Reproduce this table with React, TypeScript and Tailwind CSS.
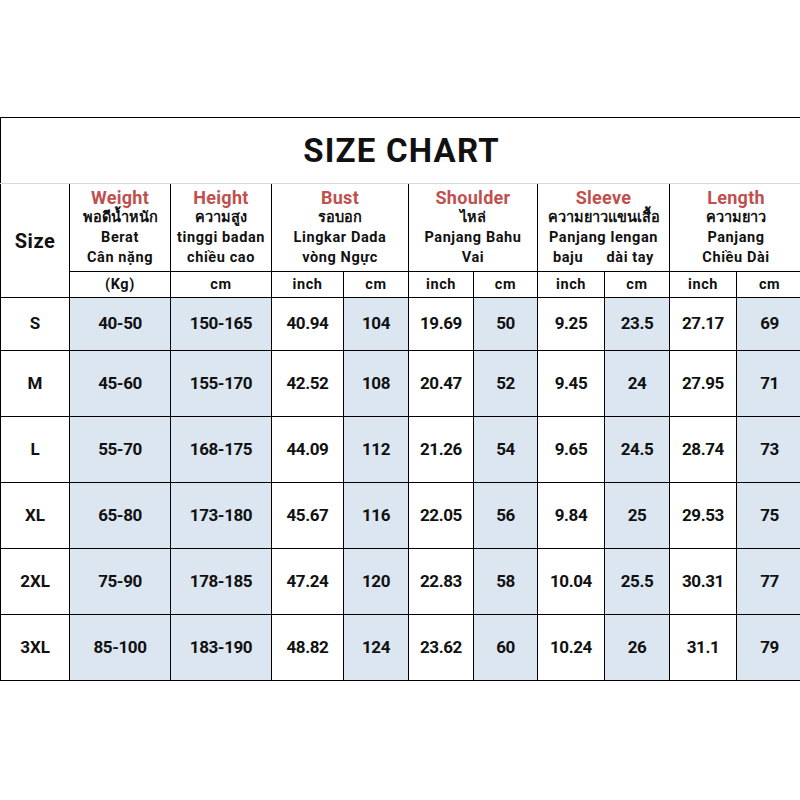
import React from "react";

const rows = [
  ["S", "40-50", "150-165", "40.94", "104", "19.69", "50", "9.25", "23.5", "27.17", "69"],
  ["M", "45-60", "155-170", "42.52", "108", "20.47", "52", "9.45", "24", "27.95", "71"],
  ["L", "55-70", "168-175", "44.09", "112", "21.26", "54", "9.65", "24.5", "28.74", "73"],
  ["XL", "65-80", "173-180", "45.67", "116", "22.05", "56", "9.84", "25", "29.53", "75"],
  ["2XL", "75-90", "178-185", "47.24", "120", "22.83", "58", "10.04", "25.5", "30.31", "77"],
  ["3XL", "85-100", "183-190", "48.82", "124", "23.62", "60", "10.24", "26", "31.1", "79"],
];

const widths = [69, 101, 101, 72, 65, 65, 64, 67, 65, 67, 66];
const shaded = [false, true, true, false, true, false, true, false, true, false, true];
const units = ["(Kg)", "cm", "inch", "cm", "inch", "cm", "inch", "cm", "inch", "cm"];

const font = { fontFamily: "Roboto, 'Noto Sans', 'Liberation Sans', sans-serif" };

const cell = "border-[1.5px] border-black text-center align-middle p-0";

const HeaderCell = ({
  title,
  lines,
  span = 1,
}: {
  title: string;
  lines: React.ReactNode[];
  span?: number;
}) => (
  <th colSpan={span} className={`${cell} border-t-0 font-bold`}>
    <div className="flex flex-col items-center leading-[20px]">
      <span className="text-[18px] text-[#c0504d] font-bold tracking-[0.3px]">{title}</span>
      {lines.map((l, i) => (
        <span
          key={i}
          className={`text-[14.5px] text-[#111] font-bold w-full ${i === 0 ? "" : "tracking-[0.6px]"}`}
        >
          {l}
        </span>
      ))}
    </div>
  </th>
);

export default function App() {
  return (
    <div className="w-[800px] h-[800px] bg-white overflow-hidden" style={font}>
      <div className="pt-[117px]">
        <table className="border-collapse table-fixed w-[801px] text-[#111]">
          <colgroup>
            {widths.map((w, i) => (
              <col key={i} style={{ width: w }} />
            ))}
          </colgroup>
          <tbody>
            <tr className="h-[66px]">
              <td
                colSpan={11}
                className="border-[1.5px] border-black border-b-[#d9d9d9] border-b text-center text-[33px] font-bold tracking-[1.2px]"
              >
                SIZE CHART
              </td>
            </tr>
            <tr className="h-[88px]">
              <th rowSpan={2} className={`${cell} border-t-0 text-[20px] font-bold tracking-[0.5px]`}>
                Size
              </th>
              <HeaderCell title="Weight" lines={["พอดีน้ำหนัก", "Berat", "Cân nặng"]} />
              <HeaderCell title="Height" lines={["ความสูง", "tinggi badan", "chiều cao"]} />
              <HeaderCell span={2} title="Bust" lines={["รอบอก", "Lingkar Dada", "vòng Ngực"]} />
              <HeaderCell span={2} title="Shoulder" lines={["ไหล่", "Panjang Bahu", "Vai"]} />
              <HeaderCell
                span={2}
                title="Sleeve"
                lines={[
                  "ความยาวแขนเสื้อ",
                  "Panjang lengan",
                  <span className="flex justify-between px-[15px]">
                    <span>baju</span>
                    <span>dài tay</span>
                  </span>,
                ]}
              />
              <HeaderCell span={2} title="Length" lines={["ความยาว", "Panjang", "Chiều Dài"]} />
            </tr>
            <tr className="h-[26px]">
              {units.map((u, i) => (
                <td key={i} className={`${cell} text-[14.5px] font-bold tracking-[0.6px]`}>
                  {u}
                </td>
              ))}
            </tr>
            {rows.map((r, ri) => (
              <tr key={ri} className={ri === 0 ? "h-[53px]" : "h-[66px]"}>
                {r.map((v, ci) => (
                  <td
                    key={ci}
                    className={`${cell} font-bold ${
                      ci === 0 ? "text-[17px]" : "text-[17px] tracking-[-0.4px]"
                    } ${shaded[ci] ? "bg-[#dce6f1]" : "bg-white"}`}
                  >
                    {v}
                  </td>
                ))}
              </tr>
            ))}
          </tbody>
        </table>
      </div>
    </div>
  );
}
